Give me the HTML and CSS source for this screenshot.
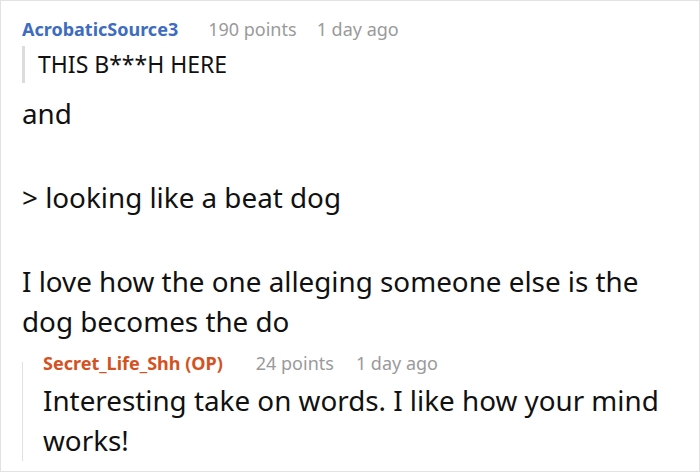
FILE: index.html
```html
<!DOCTYPE html>
<html>
<head>
<meta charset="utf-8">
<link rel="stylesheet" href="styles.css">
</head>
<body>
<div class="card">
  <div class="comment">
    <div class="meta">
      <span class="user user-blue">AcrobaticSource3</span>
      <span class="points">190 points</span>
      <span class="time">1 day ago</span>
    </div>
    <blockquote class="quote">THIS B***H HERE</blockquote>
    <p class="para">and</p>
    <p class="para">&gt; looking like a beat dog</p>
    <p class="para">I love how the one alleging someone else is the dog becomes the do</p>
    <div class="reply">
      <div class="meta">
        <span class="user user-orange">Secret_Life_Shh (OP)</span>
        <span class="points">24 points</span>
        <span class="time">1 day ago</span>
      </div>
      <p class="para reply-text">Interesting take on words. I like how your mind works!</p>
    </div>
  </div>
</div>
</body>
</html>
```
FILE: styles.css
```css
html, body {
  margin: 0;
  padding: 0;
  background: #ffffff;
}
.card {
  box-sizing: border-box;
  width: 700px;
  height: 472px;
  border: 1px solid #e2e2e2;
  padding: 15px 20px 0 21px;
  font-family: "Noto Sans", sans-serif;
  color: #111111;
  overflow: hidden;
}
.meta {
  display: flex;
  font-size: 18px;
  line-height: 26px;
  white-space: nowrap;
}
.user {
  font-weight: 700;
}
.user-blue { color: #3d6cc0; }
.user-orange { color: #d4521f; }
.points {
  color: #9a9a9a;
  margin-left: 30px;
}
.time {
  color: #9a9a9a;
  margin-left: 20px;
}
.quote {
  margin: 4px 0 0 0;
  border-left: 3px solid #dcdcdc;
  padding-left: 13px;
  font-size: 23px;
  line-height: 37px;
}
.para {
  margin: 10px 0 0 0;
  font-size: 27.8px;
  line-height: 40px;
}
.para + .para {
  margin-top: 44px;
}
.reply {
  position: relative;
  margin-top: 9px;
  padding-left: 21px;
}
.reply::before {
  content: "";
  position: absolute;
  left: 0;
  top: 12px;
  bottom: -1px;
  width: 1px;
  background: #e0e0e0;
}
.reply .points { margin-left: 33px; }
.reply .time { margin-left: 22px; }
.reply-text {
  margin-top: 4px;
}
```
